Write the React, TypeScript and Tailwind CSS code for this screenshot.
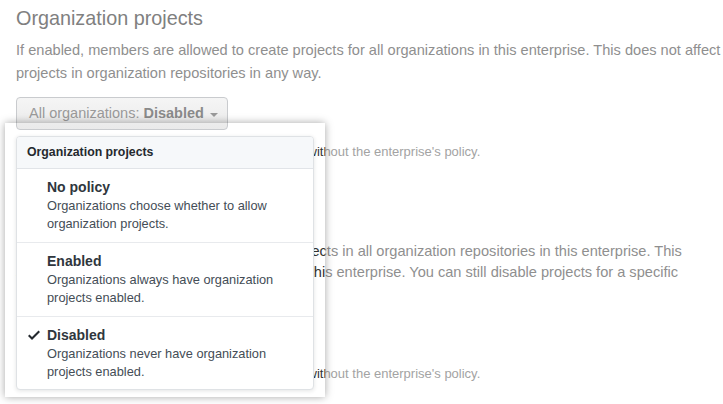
import React from "react";

const Page = ({ dim }: { dim: boolean }) => {
  const head = dim ? "text-[#808080]" : "text-[#24292e]";
  const body = dim ? "text-[#8f8f8f]" : "text-[#333]";
  const note = dim ? "text-[#a3a3a3]" : "text-[#333]";

  return (
    <div className="w-[723px] px-4 pt-[4px] font-['Liberation_Sans',Arial,sans-serif]">
      <h2 className={`text-[19.8px] leading-[28px] ${head}`}>Organization projects</h2>
      <p className={`mt-[7px] text-[14.6px] leading-[23px] whitespace-nowrap ${body}`}>
        If enabled, members are allowed to create projects for all organizations in this enterprise. This does not affect
        <br />
        projects in organization repositories in any way.
      </p>
      <div className="mt-[12px] flex">
        <div
          className={`h-[33px] w-[212px] flex items-center gap-1.5 pl-3 rounded-[4px] border border-[#c9cbce] bg-gradient-to-b from-[#f5f5f5] to-[#eaeaea] text-[14.5px] ${
            dim ? "text-[#9a9a9a]" : "text-[#24292e]"
          }`}
        >
          <span>
            All organizations: <b className={dim ? "text-[#8a8a8a]" : "text-[#24292e]"}>Disabled</b>
          </span>
          <span className="mt-[2px] border-x-[4px] border-t-[4px] border-x-transparent border-t-[#999]" />
        </div>
      </div>
      <p className={`mt-[12px] pl-[14px] text-[13px] leading-[19px] whitespace-nowrap ${note}`}>
        Organization owners cannot change this setting without the enterprise's policy.
      </p>
      <h2 className={`mt-[24px] text-[19.8px] leading-[28px] ${head}`}>Repository projects</h2>
      <p className={`mt-[28px] text-[14.6px] leading-[21px] whitespace-nowrap ${body}`}>
        <span className="tracking-[-0.12px]">If enabled, members are allowed to create proj</span>ects in all
        organization repositories in this enterprise. This
        <br />
        <span className="tracking-[0.16px]">setting also applies to repositories owned in </span>this enterprise. You
        can still disable projects for a specific
        <br />
        repository.
      </p>
      <div className="mt-[14px] h-[33px]" />
      <p className={`mt-[13px] pl-[14px] text-[13px] leading-[19px] whitespace-nowrap ${note}`}>
        Organization owners cannot change this setting without the enterprise's policy.
      </p>
    </div>
  );
};

const Check = () => (
  <svg width="12" height="16" viewBox="0 0 12 16" className="fill-[#24292e]">
    <path d="M12 5l-8 8-4-4 1.5-1.5L4 10l6.5-6.5L12 5z" />
  </svg>
);

const items = [
  { title: "No policy", desc: "Organizations choose whether to allow organization projects.", checked: false },
  { title: "Enabled", desc: "Organizations always have organization projects enabled.", checked: false },
  { title: "Disabled", desc: "Organizations never have organization projects enabled.", checked: true },
];

export default function App() {
  return (
    <div className="relative w-[723px] h-[404px] overflow-hidden bg-white">
      <Page dim />
      <div className="absolute left-[5px] top-[123px] w-[320px] h-[274px] overflow-hidden bg-white shadow-[0_0_8px_rgba(0,0,0,0.35)]">
        <div className="absolute left-[-5px] top-[-123px]">
          <Page dim={false} />
        </div>
        <div className="absolute left-[11px] top-[13px] w-[298px] h-[254px] rounded-[4px] border border-[#dfe2e5] bg-white shadow-[0_1px_4px_rgba(27,31,35,0.12)] overflow-hidden font-['Liberation_Sans',Arial,sans-serif]">
          <div className="h-[32px] flex items-center px-[10px] bg-[#f6f8fa] border-b border-[#e1e4e8] text-[12.3px] font-bold text-[#24292e]">
            Organization projects
          </div>
          {items.map((item, i) => (
            <div
              key={item.title}
              className={`flex h-[74px] pt-[8px] ${i < items.length - 1 ? "border-b border-[#e8eaed]" : ""}`}
            >
              <div className="w-[30px] flex justify-end pr-[7px] pt-[2px]">{item.checked && <Check />}</div>
              <div className="w-[260px]">
                <div className="text-[14px] leading-[20px] font-bold text-[#2f363d]">{item.title}</div>
                <div className="w-[240px] text-[12.8px] leading-[18px] text-[#444d56]">{item.desc}</div>
              </div>
            </div>
          ))}
        </div>
      </div>
    </div>
  );
}
